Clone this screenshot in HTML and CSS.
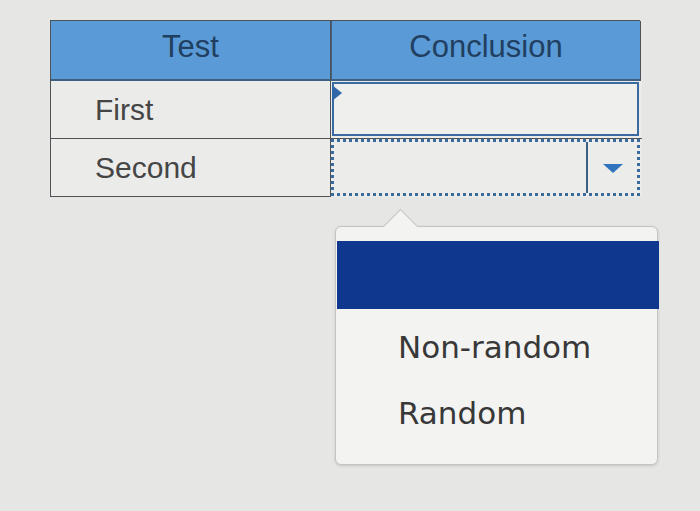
FILE: index.html
```html
<!DOCTYPE html>
<html>
<head>
<meta charset="utf-8">
<link rel="stylesheet" href="styles.css">
</head>
<body>
<div class="page">
  <div class="grid">
    <div class="th">Test</div>
    <div class="th">Conclusion</div>
    <div class="td label">First</div>
    <div class="td answer">
      <div class="answered"><span class="flag"></span></div>
    </div>
    <div class="td label">Second</div>
    <div class="td answer select-cell">
      <div class="select">
        <div class="select-value"></div>
        <div class="select-btn"><span class="caret"></span></div>
      </div>
      <div class="menu">
        <div class="menu-selected"></div>
        <div class="menu-item">Non-random</div>
        <div class="menu-item">Random</div>
      </div>
    </div>
  </div>
</div>
</body>
</html>
```

FILE: styles.css
```css
html, body {
  margin: 0;
  padding: 0;
  background: #e6e6e4;
}
.page {
  width: 700px;
  height: 511px;
  padding: 20px 0 0 50px;
  box-sizing: border-box;
  font-family: "Liberation Sans", Arial, sans-serif;
}
.grid {
  display: grid;
  grid-template-columns: 280px 310px;
  grid-template-rows: 60px 58px 58px;
  width: 590px;
  border-left: 1px solid #4f5356;
  border-top: 1px solid #4f5356;
  box-sizing: border-box;
}
.th, .td {
  border-right: 1px solid #4f5356;
  border-bottom: 1px solid #4f5356;
  box-sizing: border-box;
}
.th {
  background: #5a9bd7;
  color: #213f60;
  font-size: 31px;
  display: flex;
  align-items: center;
  justify-content: center;
  padding-bottom: 7px;
  border-bottom: 2px solid #3f5f80;
}
.th + .th {
  border-left: 1px solid #3f5f80;
}
.td {
  background: #ebebea;
}
.label {
  color: #454545;
  font-size: 30px;
  display: flex;
  align-items: center;
  padding-left: 44px;
}
.answer {
  padding: 1px 3px 2px 1px;
  border-right: none;
  margin-right: -1px;
}
.answered {
  position: relative;
  height: 100%;
  border: 2px solid #3a6aa2;
  box-sizing: border-box;
  background: #efefee;
}
.flag {
  position: absolute;
  left: -2px;
  top: 1px;
  width: 0;
  height: 0;
  border-top: 8px solid transparent;
  border-bottom: 8px solid transparent;
  border-left: 10px solid #2f67a8;
}
.select-cell {
  position: relative;
  padding: 0 2px 1px 0;
  border-bottom: none;
}
.select {
  display: flex;
  height: 100%;
  border: 3px dotted #3b6a9e;
  box-sizing: border-box;
  background: #ececeb;
}
.select-value {
  flex: 1;
}
.select-btn {
  width: 49px;
  border-left: 2px solid #3b5f86;
  display: flex;
  align-items: center;
  justify-content: center;
}
.caret {
  width: 0;
  height: 0;
  border-left: 10px solid transparent;
  border-right: 10px solid transparent;
  border-top: 9px solid #2f74bd;
  margin-top: 2px;
}
.menu {
  position: absolute;
  left: 4px;
  top: 87px;
  width: 323px;
  height: 239px;
  background: #f3f3f2;
  border: 1px solid #c4c4c2;
  border-radius: 6px;
  box-shadow: 0 1px 3px rgba(0,0,0,0.15);
  box-sizing: border-box;
  font-family: "DejaVu Sans", Verdana, sans-serif;
  padding-top: 14px;
}
.menu::before {
  content: "";
  position: absolute;
  left: 52px;
  top: -13px;
  width: 24px;
  height: 24px;
  background: #f3f3f2;
  border-left: 1px solid #c4c4c2;
  border-top: 1px solid #c4c4c2;
  transform: rotate(45deg);
}
.menu-selected {
  position: relative;
  height: 68px;
  background: #0e378d;
  margin-left: 1px;
  margin-right: -2px;
}
.menu-item {
  height: 66px;
  display: flex;
  align-items: center;
  padding-left: 62px;
  font-size: 31px;
  color: #383838;
}
.menu-selected + .menu-item {
  margin-top: 5px;
}
```
